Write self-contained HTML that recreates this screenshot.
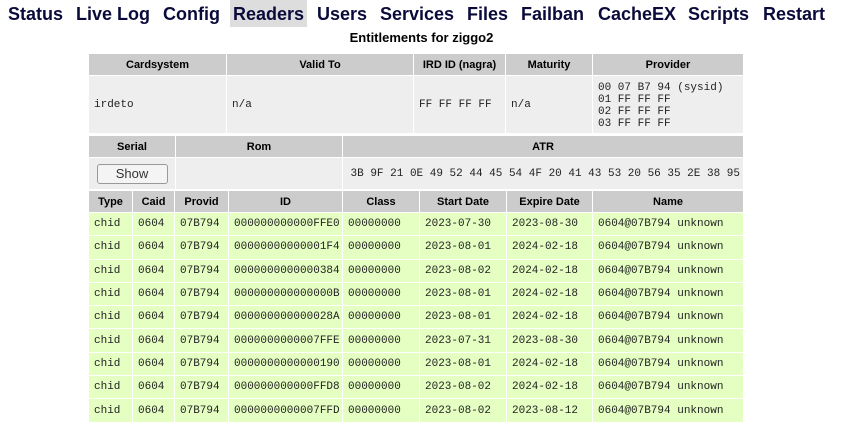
<!DOCTYPE html>
<html><head><style>
body{margin:0;width:843px;height:427px;background:#fff;font-family:"Liberation Sans",Arial,sans-serif;position:relative;overflow:hidden}
.nav{position:absolute;top:0;left:0;height:27px;white-space:nowrap}
.nav span{position:absolute;top:0;height:27px;line-height:28px;font-weight:bold;font-size:18px;color:#0b0b3b}
.title{position:absolute;top:30px;left:0;width:843px;text-align:center;font-weight:bold;font-size:13px;color:#000}
table{position:absolute;left:88px;border-collapse:separate;border-spacing:1px;table-layout:fixed;width:656px}
td,th{padding:0 5px;overflow:hidden;white-space:nowrap}
th{background:#ccc;font-size:11px;font-weight:bold;height:21px;text-align:center;color:#000}
td{background:#eee;font-family:"Liberation Mono",monospace;font-size:11px;color:#222}
tr.g td{background:#e5ffc3;height:22.3px}
button{font-family:"Liberation Sans",sans-serif;font-size:13px;width:71px;height:20px;background:#f4f4f4;border:1px solid #999;border-radius:3px;color:#333;padding:0}
</style></head><body>
<div class="nav">
<span style="left:8px">Status</span>
<span style="left:76px">Live Log</span>
<span style="left:163px">Config</span>
<span style="left:230px;width:77px;background:#ddd;text-align:center">Readers</span>
<span style="left:317px">Users</span>
<span style="left:380px">Services</span>
<span style="left:467px">Files</span>
<span style="left:521px">Failban</span>
<span style="left:598px">CacheEX</span>
<span style="left:688px">Scripts</span>
<span style="left:763px">Restart</span>
</div>
<div class="title">Entitlements for ziggo2</div>
<table style="top:53px">
<colgroup><col style="width:137px"><col style="width:186px"><col style="width:91px"><col style="width:86px"><col style="width:150px"></colgroup>
<tr><th>Cardsystem</th><th>Valid To</th><th>IRD ID (nagra)</th><th>Maturity</th><th>Provider</th></tr>
<tr><td style="height:57px">irdeto</td><td>n/a</td><td>FF FF FF FF</td><td>n/a</td><td style="line-height:12px;padding-top:2px">00 07 B7 94 (sysid)<br>01 FF FF FF<br>02 FF FF FF<br>03 FF FF FF</td></tr>
</table>
<table style="top:135px">
<colgroup><col style="width:86px"><col style="width:166px"><col style="width:400px"></colgroup>
<tr><th>Serial</th><th>Rom</th><th>ATR</th></tr>
<tr><td style="height:31px;text-align:center;padding:0"><button>Show</button></td><td></td><td style="text-align:right;padding-right:3px">3B 9F 21 0E 49 52 44 45 54 4F 20 41 43 53 20 56 35 2E 38 95</td></tr>
</table>
<table style="top:190px">
<colgroup><col style="width:43px"><col style="width:41px"><col style="width:53px"><col style="width:113px"><col style="width:76px"><col style="width:86px"><col style="width:85px"><col style="width:150px"></colgroup>
<tr><th>Type</th><th>Caid</th><th>Provid</th><th>ID</th><th>Class</th><th>Start Date</th><th>Expire Date</th><th>Name</th></tr>
<tr class="g"><td>chid</td><td>0604</td><td>07B794</td><td>000000000000FFE0</td><td>00000000</td><td>2023-07-30</td><td>2023-08-30</td><td>0604@07B794 unknown</td></tr>
<tr class="g"><td>chid</td><td>0604</td><td>07B794</td><td>00000000000001F4</td><td>00000000</td><td>2023-08-01</td><td>2024-02-18</td><td>0604@07B794 unknown</td></tr>
<tr class="g"><td>chid</td><td>0604</td><td>07B794</td><td>0000000000000384</td><td>00000000</td><td>2023-08-02</td><td>2024-02-18</td><td>0604@07B794 unknown</td></tr>
<tr class="g"><td>chid</td><td>0604</td><td>07B794</td><td>000000000000000B</td><td>00000000</td><td>2023-08-01</td><td>2024-02-18</td><td>0604@07B794 unknown</td></tr>
<tr class="g"><td>chid</td><td>0604</td><td>07B794</td><td>000000000000028A</td><td>00000000</td><td>2023-08-01</td><td>2024-02-18</td><td>0604@07B794 unknown</td></tr>
<tr class="g"><td>chid</td><td>0604</td><td>07B794</td><td>0000000000007FFE</td><td>00000000</td><td>2023-07-31</td><td>2023-08-30</td><td>0604@07B794 unknown</td></tr>
<tr class="g"><td>chid</td><td>0604</td><td>07B794</td><td>0000000000000190</td><td>00000000</td><td>2023-08-01</td><td>2024-02-18</td><td>0604@07B794 unknown</td></tr>
<tr class="g"><td>chid</td><td>0604</td><td>07B794</td><td>000000000000FFD8</td><td>00000000</td><td>2023-08-02</td><td>2024-02-18</td><td>0604@07B794 unknown</td></tr>
<tr class="g"><td>chid</td><td>0604</td><td>07B794</td><td>0000000000007FFD</td><td>00000000</td><td>2023-08-02</td><td>2023-08-12</td><td>0604@07B794 unknown</td></tr>
</table>
</body></html>
